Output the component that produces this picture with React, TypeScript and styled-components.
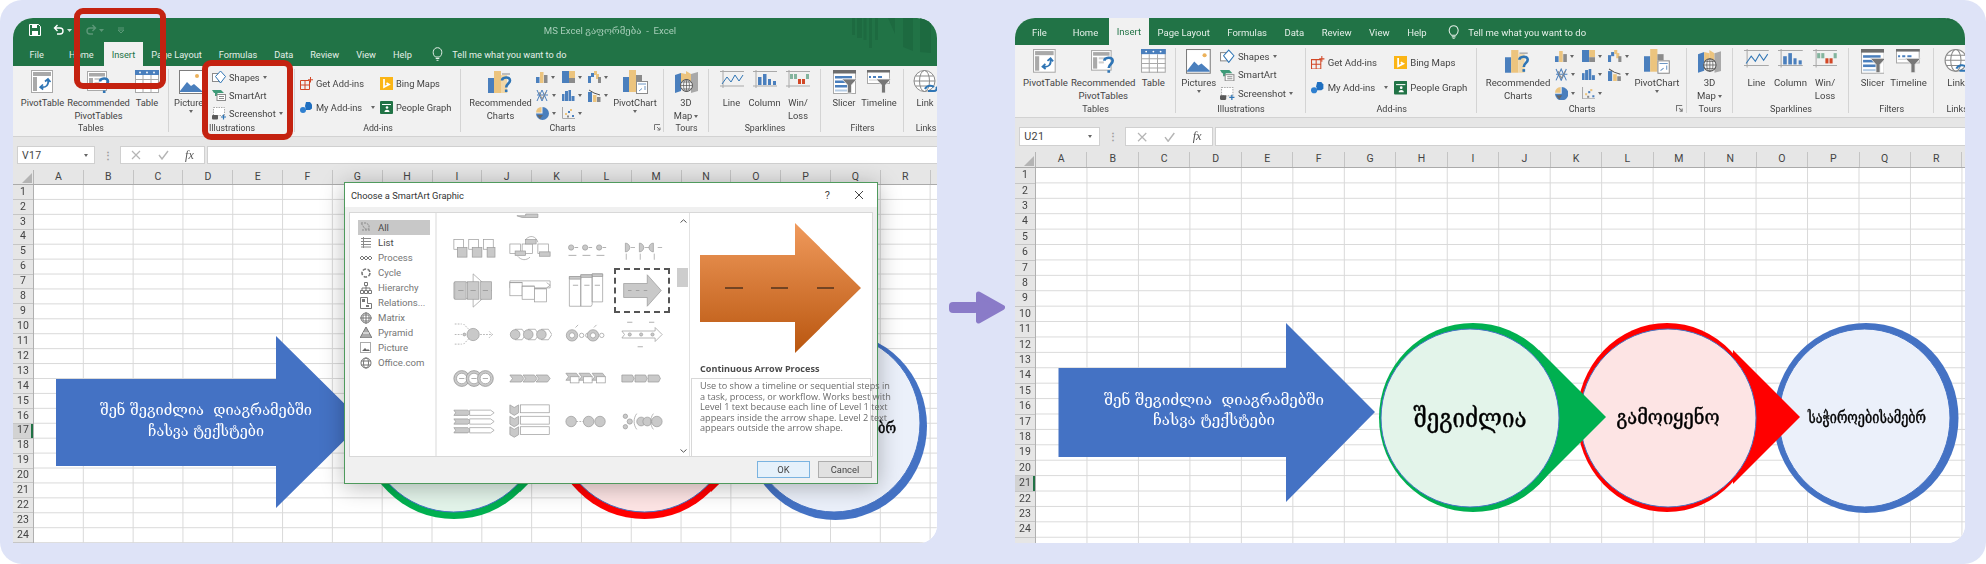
import React from "react";
import styled, { createGlobalStyle } from "styled-components";

const Global = createGlobalStyle`
  html, body { margin: 0; padding: 0; background: #fff; }
  #root { width: 1986px; height: 564px; overflow: hidden; }
  * { box-sizing: border-box; }
`;

const UI = `Roboto, "Open Sans", "Liberation Sans", sans-serif`;
const UI2 = `"Open Sans", "Noto Sans", "Liberation Sans", sans-serif`;
const KA = `"DejaVu Serif", "DejaVu Sans", serif`;

const Page = styled.div`
  width: 1986px; height: 564px; background: #dee3f7; border-radius: 22px;
  display: flex; align-items: flex-start; padding: 18px 21px 21px 13px;
  font-family: ${UI}; color: #444;
`;
const Panel = styled.section<{ $w: number }>`
  position: relative; flex: none; width: ${p => p.$w}px; height: 525px; filter: blur(0.35px);
`;
const Frame = styled.div`
  width: 100%; height: 100%; overflow: hidden; background: #fff; position: relative;
  border-radius: 20px 20px 18px 0; display: flex; flex-direction: column;
`;
const Gutter = styled.div`
  flex: none; width: 78px; padding: 273px 0 0 10px;
`;
const Chrome = styled.div<{ $zoom: number }>`
  zoom: ${p => p.$zoom}; flex: none; position: relative;
`;
const TitleBar = styled.div`
  height: 24px; background: #217346; display: flex; align-items: center; position: relative;
  padding-left: 16px; gap: 5px;
`;
const WindowTitle = styled.div`
  position: absolute; left: 0; right: 0; top: 0; bottom: 0; display: flex; align-items: center; justify-content: center;
  color: #a6cdb8; font-size: 9.6px; white-space: pre; padding-left: 270px;
  font-family: ${UI}, ${KA};
`;
const Streaks = styled.svg<{ $top: number }>`
  position: absolute; right: 0; top: ${p => p.$top}px;
`;
const TabBar = styled.nav<{ $h: number }>`
  height: ${p => p.$h}px; background: #217346; display: flex; align-items: flex-end; padding-left: 8px;
  position: relative; overflow: hidden;
`;
const Tab = styled.div<{ $active?: boolean; $wide?: boolean }>`
  height: ${p => (p.$active ? 100 : 84)}%; display: flex; align-items: center; justify-content: center;
  padding: 0 ${p => (p.$active ? 7.5 : 8.5)}px; font-size: 9.2px; white-space: nowrap;
  margin: 0 ${p => (p.$wide ? 8 : 0)}px 0 ${p => (p.$active ? 2 : 0)}px; align-self: flex-end; flex: none;
  color: ${p => (p.$active ? "#217346" : "#e4efe8")};
  background: ${p => (p.$active ? "#f1f1f1" : "transparent")};
  padding-bottom: ${p => (p.$active ? 0 : 3)}px;
`;
const TellMe = styled.div`
  display: flex; align-items: center; gap: 9px; color: #e4efe8; font-size: 9.2px; margin-left: 12px;
  padding-bottom: 3px; align-self: flex-end; height: 84%;
`;
const Ribbon = styled.div`
  height: 71px; background: #f1f1f1; border-bottom: 1px solid #d2d2d2; display: flex; overflow: hidden;
`;
const Group = styled.div<{ $w: number; $pad?: number; $noline?: boolean }>`
  flex: none; width: ${p => p.$w}px; position: relative; display: flex; flex-direction: column;
  &::after {
    content: ""; position: absolute; right: 0; top: 3px; bottom: 4px; width: 1px;
    background: ${p => (p.$noline ? "transparent" : "#d4d4d4")};
  }
`;
const GroupBody = styled.div<{ $pad: number; $gap?: number }>`
  flex: 1; display: flex; padding-left: ${p => p.$pad}px; gap: ${p => p.$gap ?? 0}px; min-height: 0;
`;
const GroupLabel = styled.div`
  height: 13px; line-height: 12px; text-align: center; font-size: 8.8px; color: #444; position: relative; flex: none; margin-bottom: 1px;
`;
const Launcher = styled.svg`
  position: absolute; right: 3px; top: 2px;
`;
const Large = styled.div<{ $w: number }>`
  flex: none; width: ${p => p.$w}px; display: flex; flex-direction: column; align-items: center;
  padding-top: 4px; font-size: 9.3px; line-height: 12.5px; text-align: center; color: #444; white-space: nowrap;
`;
const IconSlot = styled.div`
  height: 27px; display: flex; align-items: flex-start; justify-content: center;
`;
const Caret = styled.span<{ $ml?: number }>`
  display: inline-block; width: 0; height: 0; border: 2.5px solid transparent; border-top: 3px solid #666; border-bottom: 0;
  vertical-align: middle; margin-left: ${p => p.$ml ?? 0}px;
`;
const SmallColumn = styled.div<{ $step: number; $top: number; $ml?: number; $w?: number }>`
  display: grid; grid-auto-rows: ${p => p.$step}px; padding-top: ${p => p.$top}px; margin-left: ${p => p.$ml ?? 0}px;
  width: ${p => (p.$w ? `${p.$w}px` : "auto")}; flex: none;
`;
const Small = styled.div`
  display: flex; align-items: center; gap: 3px; font-size: 9.3px; white-space: nowrap; color: #444;
`;
const ChartGrid = styled.div`
  display: grid; grid-template-columns: repeat(3, 26px); grid-auto-rows: 18px; padding-top: 2px; flex: none; margin-left: 4px;
`;
const ChartCell = styled.div`
  display: flex; align-items: center; gap: 3px;
`;
const FormulaRow = styled.div`
  height: 33px; background: #e6e6e6; padding: 9px 0 6px 4px; display: flex; gap: 0; align-items: stretch;
`;
const NameBox = styled.div`
  width: 78px; background: #fff; border: 1px solid #d0d0d0; display: flex; align-items: center; justify-content: space-between;
  padding: 0 6px 0 4px; font-size: 10.5px; color: #444; letter-spacing: .3px;
`;
const Dots = styled.div`
  width: 25px; display: flex; align-items: center; justify-content: center; color: #9a9a9a; font-size: 10px; font-weight: 700;
`;
const FxBox = styled.div`
  width: 85px; background: #fff; border: 1px solid #d0d0d0; display: flex; align-items: center; justify-content: space-around;
  margin-right: 2px; padding: 0 2px;
`;
const FxText = styled.span`
  font-family: "Liberation Serif", serif; font-style: italic; font-size: 12px; color: #555;
`;
const FormulaInput = styled.div`
  flex: 1; background: #fff; border: 1px solid #d0d0d0; border-right: 0;
`;
const ColHeader = styled.div<{ $h: number }>`
  height: ${p => p.$h}px; flex: none; display: flex; background: #e6e6e6; border-bottom: 1px solid #ababab;
`;
const Corner = styled.div`
  flex: none; width: 21px; position: relative; border-right: 1px solid #b5b5b5; overflow: hidden;
  &::after { content: ""; position: absolute; right: 1px; bottom: 1px; border: 5px solid transparent; border-right-color: #b4b4b4; border-bottom-color: #b4b4b4; }
`;
const ColCell = styled.div<{ $w: number }>`
  flex: none; width: ${p => p.$w}px; border-right: 1px solid #c4c4c4; display: flex; align-items: center; justify-content: center;
  font-size: 10.5px; color: #444; line-height: 1;
`;
const SheetBody = styled.div`
  flex: 1; display: flex; min-height: 0; overflow: hidden;
`;
const RowHeader = styled.div`
  flex: none; width: 21px; background: #e6e6e6; border-right: 1px solid #b0b0b0; overflow: hidden;
`;
const RowNum = styled.div<{ $h: number; $sel?: boolean }>`
  height: ${p => p.$h}px; border-bottom: 1px solid #c6c6c6; display: flex; align-items: center; justify-content: center;
  font-size: 10.5px; color: #444; line-height: 1; position: relative;
  background: ${p => (p.$sel ? "#d2d2d2" : "transparent")};
  box-shadow: ${p => (p.$sel ? "inset -2px 0 0 #217346" : "none")};
`;
const Cells = styled.div<{ $cw: number; $rh: number }>`
  flex: 1; background-color: #fff;
  background-image: linear-gradient(to right, #d9d9d9 1px, transparent 1px), linear-gradient(to bottom, #d9d9d9 1px, transparent 1px);
  background-size: ${p => p.$cw}px ${p => p.$rh}px;
  background-position: ${p => p.$cw - 1}px ${p => p.$rh - 1}px;
`;
const DiagramLayer = styled.svg`
  position: absolute; left: 0; top: 0; pointer-events: none;
  text { white-space: pre; }
`;
const Annotation = styled.div<{ $x: number; $y: number; $w: number; $h: number }>`
  position: absolute; left: ${p => p.$x}px; top: ${p => p.$y}px; width: ${p => p.$w}px; height: ${p => p.$h}px;
  border: 6px solid #c42210; border-radius: 9px;
`;
const Dialog = styled.div`
  position: absolute; left: 331px; top: 164px; width: 534px; height: 302px; background: #f0f0f0; border: 1px solid #4f9a5d;
  box-shadow: 0 3px 22px rgba(0,0,0,.28); display: flex; flex-direction: column;
`;
const DialogTitle = styled.div`
  height: 24px; background: #fff; display: flex; align-items: center; padding: 0 13px 0 6px; font-size: 9.3px; color: #333; flex: none;
`;
const DialogTitleText = styled.span`
  flex: 1;
`;
const HelpMark = styled.span`
  font-size: 11px; margin-right: 24px; color: #444;
`;
const DialogBody = styled.div`
  margin: 5px 4px 0; height: 245px; background: #fff; border: 1px solid #d8d8d8; display: flex; flex: none;
`;
const CategoryList = styled.ul`
  list-style: none; margin: 0; padding: 7px 0 0 8px; width: 87px; flex: none; border-right: 2px solid #ececec;
`;
const Category = styled.li<{ $on?: boolean; $dim?: boolean }>`
  width: 72px; height: 15px; display: flex; align-items: center; gap: 6px; padding-left: 2px; font-size: 9.6px; white-space: nowrap;
  background: ${p => (p.$on ? "#c8c8c8" : "transparent")};
  color: ${p => (p.$dim ? "#767676" : "#4a4a4a")};
`;
const Gallery = styled.div`
  width: 240px; flex: none; overflow: hidden; display: flex; flex-direction: column; position: relative;
`;
const ThumbGrid = styled.div`
  display: grid; grid-template-columns: repeat(4, 56px); grid-auto-rows: 43.6px; margin: -31px 0 0 9px;
`;
const Thumb = styled.div<{ $sel?: boolean }>`
  display: flex; align-items: center; justify-content: center;
`;
const Selection = styled.div`
  position: absolute; left: 177px; top: 55px; width: 56px; height: 45px; border: 2px dashed #555; pointer-events: none;
`;
const Scrollbar = styled.div`
  width: 13px; flex: none; position: relative; display: flex; flex-direction: column; justify-content: space-between; align-items: center; padding: 6px 0 3px;
  border-right: 1px solid #e2e2e2;
`;
const ScrollThumb = styled.div`
  position: absolute; left: 0; right: 1px; top: 55px; height: 19px; background: #cdcdcd;
`;
const Preview = styled.div`
  flex: 1; min-width: 0; display: flex; flex-direction: column; padding: 0 1px 0 1px;
`;
const PreviewArt = styled.div`
  height: 149px; padding: 10px 0 0 9px; flex: none;
`;
const PreviewName = styled.div`
  height: 16px; padding-left: 9px; font-family: ${UI2}; font-size: 9.1px; font-weight: 700; color: #4a4a4a; white-space: nowrap; flex: none; line-height: 14px;
`;
const PreviewText = styled.div`
  height: 79px; border: 1px solid #d8d8d8; padding: 2px 3px 0 8px; font-family: ${UI2}; font-size: 9.15px; line-height: 10.6px; color: #6a6a6a; white-space: nowrap; flex: none;
`;
const DialogFoot = styled.div`
  flex: 1; display: flex; justify-content: flex-end; align-items: flex-start; padding: 4px 5px 0 0; gap: 8px;
`;
const DialogButton = styled.div<{ $primary?: boolean }>`
  width: ${p => (p.$primary ? 53 : 54)}px; height: 17px; display: flex; align-items: center; justify-content: center; font-size: 9.4px; color: #444;
  background: ${p => (p.$primary ? "#e5f1fb" : "#e1e1e1")};
  border: 1px solid ${p => (p.$primary ? "#7ab3e0" : "#adadad")};
`;

/* ---------- drawings ---------- */
const B = "#4a7fbd", Y = "#ecc47e", G = "#8b8b8b", L = "#a9a9a9";

const Ic = ({ w, h, children }: { w: number; h: number; children?: React.ReactNode }) => (
  <svg width={w} height={h} viewBox={`0 0 ${w} ${h}`} style={{ flex: "none", display: "block" }}>{children}</svg>
);

const IPivot = () => (
  <Ic w={24} h={24}>
    <rect x=".5" y=".5" width="21" height="22" fill="#fff" stroke={L} />
    <rect x="2" y="2" width="18" height="4" fill={L} /><rect x="2" y="7" width="4" height="14" fill={L} />
    <path d="M10 17c5 1 8-2 7-7M14 11.5l3-2.5 2.5 3M12 14.5l-2.8 2.6 3 2.4" fill="none" stroke="#2f75b5" strokeWidth="1.7" />
  </Ic>
);
const IQ = ({ x, y }: { x: number; y: number }) => (
  <g transform={`translate(${x} ${y})`} fill="none" stroke="#2f75b5" strokeWidth="2.6">
    <path d="M0 4.5C0 1 8 0 8 4.5c0 3-3.8 3-3.8 7" /><path d="M4.2 13.5v2.6" />
  </g>
);
const IRecPivot = () => (
  <Ic w={24} h={25}>
    <rect x=".5" y="1.5" width="19" height="19" fill="#fff" stroke={L} />
    <rect x="2" y="3" width="16" height="3.5" fill={L} /><rect x="2" y="8" width="4" height="11" fill={L} />
    <rect x="7.5" y="8" width="6" height="2" fill="#cfcfcf" /><rect x="7.5" y="12" width="5" height="2" fill="#cfcfcf" />
    <IQ x={13} y={7} />
  </Ic>
);
const ITable = () => (
  <Ic w={24} h={24}>
    <rect x=".5" y=".5" width="23" height="22" fill="#fff" stroke={L} />
    <rect x="0" y="0" width="24" height="5" fill="#4a7fbd" />
    <circle cx="5" cy="2.5" r=".9" fill="#fff" /><circle cx="12" cy="2.5" r=".9" fill="#fff" /><circle cx="19" cy="2.5" r=".9" fill="#fff" />
    <path d="M8 5v18M16 5v18M0 9.5h24M0 14h24M0 18.5h24" stroke={L} />
  </Ic>
);
const IPictures = () => (
  <Ic w={24} h={24}>
    <rect x=".5" y=".5" width="23" height="23" fill="#fff" stroke="#7d7d7d" />
    <circle cx="18" cy="6" r="2" fill="#ecb25b" />
    <path d="M1 21l7-9 4 4 3-2 8 7v1H1z" fill="#4a7fbd" />
  </Ic>
);
const IShapes = () => (
  <Ic w={14} h={14}>
    <rect x=".5" y="3.5" width="8" height="8" fill="#fff" stroke={G} />
    <path d="M8.5 1l5 5.5-5 6.5-5-6.5z" fill="#fff" stroke="#2f75b5" />
  </Ic>
);
const ISmartArt = () => (
  <Ic w={14} h={12}>
    <path d="M0 1h9l3 3H5.5v3H3V4H2z" fill="#3e9a78" />
    <rect x="5" y="5.5" width="8.5" height="6" fill="#fff" stroke={G} />
    <path d="M7 7.5h5M7 9.5h5" stroke={G} />
  </Ic>
);
const IScreenshot = () => (
  <Ic w={14} h={13}>
    <rect x="1.5" y=".5" width="11" height="8" fill="#fff" stroke={L} strokeDasharray="1.5 1" />
    <rect x="0" y="8" width="6" height="4.5" rx="1" fill="#5a5a5a" />
    <path d="M11.5 7.5v5M9 10h5" stroke="#2f75b5" strokeWidth="1.2" />
  </Ic>
);
const IGetAddins = () => (
  <Ic w={13} h={13}>
    <path d="M.5 3.5h9v9h-9zM.5 8h9M5 3.5v9" fill="none" stroke="#d24726" />
    <path d="M10.5 0v5.5M8 2.8h5" stroke="#d24726" strokeWidth="1" />
  </Ic>
);
const IMyAddins = () => (
  <Ic w={13} h={12}>
    <path d="M6 0h4l2 2.5v4L10 8H6L5 4z" fill="#1f6fc0" /><circle cx="3" cy="8" r="3" fill="#2f80d0" />
  </Ic>
);
const IBing = () => (
  <Ic w={13} h={13}>
    <rect width="13" height="13" fill="#fbb515" />
    <path d="M4 2v8l5-2.5L6.5 6" fill="none" stroke="#fff" strokeWidth="1.7" />
  </Ic>
);
const IPeople = () => (
  <Ic w={13} h={13}>
    <rect width="13" height="13" rx="1" fill="#217346" />
    <path d="M2 3.5h9" stroke="#fff" /><circle cx="7" cy="6.5" r="1.3" fill="#fff" /><path d="M4.5 11c0-3 5-3 5 0z" fill="#fff" />
  </Ic>
);
const IRecCharts = () => (
  <Ic w={26} h={24}>
    <rect x="0" y="8" width="6" height="15" fill={B} /><rect x="6" y="1" width="7" height="22" fill={Y} />
    <rect x="13" y="5" width="6" height="18" fill="#f0d7a8" />
    <path d="M14 4h8" stroke={G} />
    <IQ x={14} y={6} />
  </Ic>
);
const C1 = () => <Ic w={12} h={11}><rect y="5" width="3.5" height="6" fill={B} /><rect x="4" y="0" width="3.5" height="11" fill={Y} /><rect x="8" y="3" width="3.5" height="8" fill={G} /></Ic>;
const C2 = () => <Ic w={13} h={12}><rect width="7" height="12" fill={B} /><rect x="7" width="6" height="7" fill={Y} /><rect x="7" y="7" width="6" height="5" fill={G} /></Ic>;
const C3 = () => <Ic w={13} h={12}><rect y="5" width="3" height="7" fill={B} /><rect x="3" y="2" width="3" height="4" fill={B} /><rect x="6" y="0" width="3" height="4" fill={Y} /><rect x="8" y="3" width="3" height="5" fill={Y} /><rect x="10" y="6" width="3" height="6" fill={G} /></Ic>;
const C4 = () => <Ic w={13} h={13}><path d="M1 1l5 11 5-11M1 12l5-11 5 11M1 6h11" fill="none" stroke={B} strokeWidth="1" /><path d="M3 3l3 7 4-7" fill="none" stroke={G} /></Ic>;
const C5 = () => <Ic w={13} h={11}><rect y="4" width="2.5" height="7" fill={B} /><rect x="3" y="1" width="3" height="10" fill={B} /><rect x="6.5" y="0" width="2.5" height="11" fill={B} /><rect x="9.5" y="6" width="3" height="5" fill={B} /></Ic>;
const C6 = () => <Ic w={13} h={13}><rect y="3" width="4" height="10" fill={B} /><rect x="5" y="6" width="3.5" height="7" fill={Y} /><rect x="9" y="8" width="3.5" height="5" fill={G} /><path d="M1 1l5 3 6 2" fill="none" stroke="#555" /></Ic>;
const C7 = () => <Ic w={13} h={13}><path d="M6.5 6.5V0a6.5 6.5 0 1 1-6.5 6.5z" fill={B} /><path d="M0 5.5A6 6 0 0 1 5.5 0v5.5z" fill={Y} /><path d="M1 8h6l-3 4z" fill="#666" /></Ic>;
const C8 = () => <Ic w={13} h={12}><path d="M.5 0v11.5H13" stroke={L} fill="none" /><g fill={Y}><rect x="3" y="6" width="2" height="2" /><rect x="8" y="2" width="2" height="2" /></g><g fill={B}><rect x="6" y="4" width="2" height="2" /><rect x="10" y="8" width="2" height="2" /></g><rect x="5" y="8.5" width="2" height="2" fill={G} /></Ic>;

const IPivotChart = () => (
  <Ic w={25} h={24}>
    <rect x="0" y="7" width="6" height="15" fill={B} /><rect x="6" y="0" width="7" height="22" fill={Y} />
    <rect x="13" y="5" width="6" height="6" fill={G} /><rect x="13" y="11" width="6" height="11" fill="#d4d4d4" />
    <rect x="13.5" y="11.5" width="11" height="12" fill="#fff" stroke={G} />
    <path d="M15 14h8M16 21l3-2.5M22 20v-4" stroke="#6c96c4" />
  </Ic>
);
const I3D = () => (
  <Ic w={23} h={24}>
    <path d="M0 5l6-2v18l-6 2z" fill={B} /><path d="M6 3l5 1v15H6z" fill={Y} /><path d="M11 1l5 3v15h-5z" fill={Y} />
    <path d="M16 4l7-2v19l-7 2z" fill={L} />
    <circle cx="11.5" cy="15.5" r="6" fill="#f4f4f4" stroke="#555" />
    <path d="M5.5 15.5h12M11.5 9.5v12M7 12h9M7 19h9" stroke="#555" strokeWidth=".7" />
    <ellipse cx="11.5" cy="15.5" rx="3" ry="6" fill="none" stroke="#555" strokeWidth=".7" />
  </Ic>
);
const SparkFrame = ({ children }: { children?: React.ReactNode }) => (
  <Ic w={24} h={18}>
    <path d="M0 1.5h24M0 16h24M3 0v18" stroke={L} />{children}
  </Ic>
);
const ILine = () => <SparkFrame><path d="M2 14l5-7 4 5 4-7 4 6 4-6" fill="none" stroke="#2f75b5" strokeWidth="1" /></SparkFrame>;
const IColumn = () => <SparkFrame><rect x="5" y="7" width="3.5" height="8" fill={B} /><rect x="10" y="4" width="3.5" height="11" fill={B} /><rect x="15" y="9" width="3" height="6" fill={B} /><rect x="20" y="11" width="3" height="4" fill={B} /></SparkFrame>;
const IWin = () => <SparkFrame><rect x="4" y="4" width="3" height="5" fill="#83b49e" /><rect x="8" y="4" width="3" height="5" fill="#83b49e" /><rect x="12" y="9" width="3" height="5" fill="#d24726" /><rect x="16" y="9" width="3" height="5" fill="#d24726" /><rect x="20" y="4" width="3" height="5" fill="#83b49e" /></SparkFrame>;
const Funnel = ({ x, y }: { x: number; y: number }) => (
  <path transform={`translate(${x} ${y})`} d="M0 0h15l-5.5 6v8h-4V6z" fill="#777" stroke="#f1f1f1" strokeWidth=".8" />
);
const ISlicer = () => (
  <Ic w={23} h={24}>
    <rect x=".5" y=".5" width="22" height="23" fill="#fff" stroke={L} />
    <rect width="23" height="3.5" fill="#6d6d6d" />
    <rect x="2" y="6" width="17" height="2.5" fill={B} /><rect x="2" y="10.5" width="13" height="2.5" fill={B} /><rect x="2" y="15" width="13" height="2.5" fill={B} /><rect x="2" y="19.5" width="13" height="2" fill="#b5cce4" />
    <Funnel x={9} y={9} />
  </Ic>
);
const ITimeline = () => (
  <Ic w={24} h={24}>
    <rect x=".5" y=".5" width="22" height="13" fill="#fff" stroke={L} />
    <rect width="23" height="2.5" fill="#6d6d6d" />
    <path d="M2 7h2M6 7h3M11 7h4" stroke={B} strokeWidth="2" /><path d="M2 10h15" stroke="#ccc" />
    <Funnel x={9} y={9} />
  </Ic>
);
const ILink = () => (
  <Ic w={24} h={24}>
    <circle cx="11.5" cy="11" r="10.5" fill="#fff" stroke="#8a8a8a" />
    <ellipse cx="11.5" cy="11" rx="5" ry="10.5" fill="none" stroke="#8a8a8a" />
    <path d="M1 11h21M2.5 6h18M2.5 16h18" stroke="#8a8a8a" />
    <path d="M12 19c2-4 7-4 9-2M15 21h6c3 0 3-3 2-4" fill="none" stroke="#2f75b5" strokeWidth="2" />
  </Ic>
);

const QuickAccess = () => (
  <>
    <Ic w={12} h={12}><path d="M.5.5h9l2 2v9H.5z" fill="none" stroke="#fff" /><rect x="3" y=".5" width="5" height="3.5" fill="#fff" /><rect x="3" y="7" width="6" height="4.5" fill="#fff" /></Ic>
    <span style={{ width: 1 }} />
    <Ic w={20} h={12}><path d="M3 4h5c4 0 4 6 0 6H5M5.5 1L2.5 4l3 3" fill="none" stroke="#fff" strokeWidth="1.4" /><path d="M15 5h5l-2.5 3z" fill="#d5e5dc" /></Ic>
    <span style={{ width: 2 }} />
    <Ic w={20} h={12}><path d="M11 4H6c-4 0-4 6 0 6h3M8.5 1l3 3-3 3" fill="none" stroke="#5b9777" strokeWidth="1.4" /><path d="M15 5h5l-2.5 3z" fill="#5b9777" /></Ic>
    <span style={{ width: 3 }} />
    <Ic w={8} h={8}><path d="M1 2h6M1 4h6l-3 3z" fill="none" stroke="#5b9777" /></Ic>
  </>
);
const Bulb = () => (
  <Ic w={11} h={14}><path d="M3.5 10C-.5 7 1 .7 5.5.7S11.5 7 7.5 10zM3.7 11.5h3.6M4.5 13.3h2" fill="none" stroke="#e4efe8" strokeWidth="1" /></Ic>
);
const StreakArt = () => (
  <g fill="#1d6a40">
    <rect x="0" y="0" width="3" height="17" /><rect x="5" y="0" width="5" height="20" /><rect x="11.5" y="0" width="3" height="22" />
    <rect x="17" y="0" width="3" height="30" /><rect x="23" y="0" width="3" height="22" />
    <path d="M36 0h7v16z" /><path d="M51 0h10v33l-10-4z" /><path d="M68 0h11v35l-11-1z" />
  </g>
);

const Ribbonbar = () => (
  <Ribbon>
    <Group $w={156}>
      <GroupBody $pad={8} $gap={3}>
        <Large $w={43}><IconSlot><IPivot /></IconSlot>PivotTable</Large>
        <Large $w={63}><IconSlot><IRecPivot /></IconSlot>Recommended<br />PivotTables</Large>
        <Large $w={28}><IconSlot><ITable /></IconSlot>Table</Large>
      </GroupBody>
      <GroupLabel>Tables</GroupLabel>
    </Group>
    <Group $w={126}>
      <GroupBody $pad={4} $gap={3}>
        <Large $w={36}><IconSlot><IPictures /></IconSlot>Pictures<br /><Caret /></Large>
        <SmallColumn $step={18} $top={2}>
          <Small><IShapes />Shapes<Caret /></Small>
          <Small><ISmartArt />SmartArt</Small>
          <Small><IScreenshot />Screenshot<Caret /></Small>
        </SmallColumn>
      </GroupBody>
      <GroupLabel>Illustrations</GroupLabel>
    </Group>
    <Group $w={166}>
      <GroupBody $pad={5}>
        <SmallColumn $step={24.5} $top={5} $w={80}>
          <Small><IGetAddins />Get Add-ins</Small>
          <Small><IMyAddins />My Add-ins<Caret $ml={6} /></Small>
        </SmallColumn>
        <SmallColumn $step={24.5} $top={5}>
          <Small><IBing />Bing Maps</Small>
          <Small><IPeople />People Graph</Small>
        </SmallColumn>
      </GroupBody>
      <GroupLabel>Add-ins</GroupLabel>
    </Group>
    <Group $w={203}>
      <GroupBody $pad={8}>
        <Large $w={63}><IconSlot><IRecCharts /></IconSlot>Recommended<br />Charts</Large>
        <ChartGrid>
          <ChartCell><C1 /><Caret /></ChartCell><ChartCell><C2 /><Caret /></ChartCell><ChartCell><C3 /><Caret /></ChartCell>
          <ChartCell><C4 /><Caret /></ChartCell><ChartCell><C5 /><Caret /></ChartCell><ChartCell><C6 /><Caret /></ChartCell>
          <ChartCell><C7 /><Caret /></ChartCell><ChartCell><C8 /><Caret /></ChartCell>
        </ChartGrid>
        <Large $w={42}><IconSlot><IPivotChart /></IconSlot>PivotChart<br /><Caret /></Large>
      </GroupBody>
      <GroupLabel>Charts
        <Launcher width="7" height="7" viewBox="0 0 7 7"><path d="M.5 6V.5H6M3 3l3 3M6 3.5V6H3.5" fill="none" stroke="#777" /></Launcher>
      </GroupLabel>
    </Group>
    <Group $w={45}>
      <GroupBody $pad={7}>
        <Large $w={30}><IconSlot><I3D /></IconSlot>3D<br /><span>Map<Caret $ml={2} /></span></Large>
      </GroupBody>
      <GroupLabel>Tours</GroupLabel>
    </Group>
    <Group $w={112}>
      <GroupBody $pad={6}>
        <Large $w={33}><IconSlot><ILine /></IconSlot>Line</Large>
        <Large $w={33}><IconSlot><IColumn /></IconSlot>Column</Large>
        <Large $w={34}><IconSlot><IWin /></IconSlot>Win/<br />Loss</Large>
      </GroupBody>
      <GroupLabel>Sparklines</GroupLabel>
    </Group>
    <Group $w={83}>
      <GroupBody $pad={8}>
        <Large $w={30}><IconSlot><ISlicer /></IconSlot>Slicer</Large>
        <Large $w={40}><IconSlot><ITimeline /></IconSlot>Timeline</Large>
      </GroupBody>
      <GroupLabel>Filters</GroupLabel>
    </Group>
    <Group $w={44} $noline>
      <GroupBody $pad={4}>
        <Large $w={34}><IconSlot><ILink /></IconSlot>Link</Large>
      </GroupBody>
      <GroupLabel>Links</GroupLabel>
    </Group>
  </Ribbon>
);

const Formula = ({ name }: { name: string }) => (
  <FormulaRow>
    <NameBox>{name}<Caret /></NameBox>
    <Dots>⋮</Dots>
    <FxBox>
      <Ic w={10} h={10}><path d="M1 1l8 8M9 1L1 9" stroke="#b5b5b5" strokeWidth="1.2" /></Ic>
      <Ic w={11} h={10}><path d="M1 5l3 4 6-8" fill="none" stroke="#b5b5b5" strokeWidth="1.4" /></Ic>
      <FxText>fx</FxText>
    </FxBox>
    <FormulaInput />
  </FormulaRow>
);

const COLS = "ABCDEFGHIJKLMNOPQRS".split("");

const Sheet = ({ cw, rh, hh, sel }: { cw: number; rh: number; hh: number; sel: number }) => (
  <>
    <ColHeader $h={hh}>
      <Corner />
      {COLS.map(c => <ColCell key={c} $w={cw}>{c === "S" ? "" : c}</ColCell>)}
    </ColHeader>
    <SheetBody>
      <RowHeader>
        {Array.from({ length: 25 }, (_, i) => (
          <RowNum key={i} $h={rh} $sel={i + 1 === sel}>{i < 24 ? i + 1 : ""}</RowNum>
        ))}
      </RowHeader>
      <Cells $cw={cw} $rh={rh} />
    </SheetBody>
  </>
);

type NodeSpec = {
  color: string; fill: string; ox: number; oy: number; orx: number; ory: number;
  ix: number; iy: number; irx: number; iry: number; tri?: string; text: string; tx: number; ty: number; tw: number; fs: number; covered?: boolean;
};

const Node = ({ n }: { n: NodeSpec }) => (
  <g>
    <ellipse cx={n.ox} cy={n.oy} rx={n.orx} ry={n.ory} fill={n.color} />
    {n.tri && <polygon points={n.tri} fill={n.color} />}
    <ellipse cx={n.ix} cy={n.iy} rx={n.irx} ry={n.iry} fill={n.fill} stroke="#4472c4" strokeWidth="1" />
  </g>
);
const NodeLabel = ({ n }: { n: NodeSpec }) => (
  <text x={n.tx} y={n.ty} textAnchor="middle" fontFamily={KA} fontSize={n.fs} fill="#000" stroke="#000" strokeWidth=".45"
    textLength={n.tw} lengthAdjust="spacingAndGlyphs">{n.text}</text>
);

const Diagram = ({ vx, arrow, lines, nodes }: {
  vx: number; arrow: string;
  lines: { x: number; y: number; w: number; t: string }[];
  nodes: NodeSpec[];
}) => (
  <DiagramLayer width={vx === 13 ? 924 : 950} height={525} viewBox={`${vx} 18 ${vx === 13 ? 924 : 950} 525`}>
    <polygon points={arrow} fill="#4472c4" />
    {lines.map(l => (
      <text key={l.t} x={l.x} y={l.y} textAnchor="middle" fontFamily={KA} fontSize="14.5" fill="#fff"
        textLength={l.w} lengthAdjust="spacingAndGlyphs">{l.t}</text>
    ))}
    {[...nodes].reverse().map(n => <Node key={n.text} n={n} />)}
    {nodes.filter(n => !n.covered).map(n => <NodeLabel key={n.text} n={n} />)}
  </DiagramLayer>
);

const T1 = "შეგიძლია", T2 = "გამოიყენო", T3 = "საჭიროებისამებრ";
const L1 = "შენ შეგიძლია  დიაგრამებში", L2 = "ჩასვა ტექსტები";
const GREEN = "#00b050", GREENF = "#e3f4ea", RED = "#ff0000", REDF = "#fde4e4", BLUE = "#4472c4", BLUEF = "#ebf0fa";

const leftNodes: NodeSpec[] = [
  { color: GREEN, fill: GREENF, ox: 454, oy: 425.5, orx: 93.5, ory: 93.5, ix: 453.5, iy: 423.5, irx: 88, iry: 88.5, tri: "520,358 588,425 520,492", text: T1, tx: 453, ty: 433, tw: 113, fs: 24, covered: true },
  { color: RED, fill: REDF, ox: 644.5, oy: 425.5, orx: 93.5, ory: 93.5, ix: 644.5, iy: 423.5, irx: 88, iry: 88.5, tri: "711,358 779,425 711,492", text: T2, tx: 644, ty: 432, tw: 103, fs: 19, covered: true },
  { color: BLUE, fill: BLUEF, ox: 835.5, oy: 426, orx: 91.5, ory: 94, ix: 834, iy: 423, irx: 86, iry: 89, text: T3, tx: 836, ty: 433, tw: 120, fs: 15 },
];
const rightNodes: NodeSpec[] = [
  { color: GREEN, fill: GREENF, ox: 1473, oy: 417.5, orx: 94, ory: 94.5, ix: 1470, iy: 418, irx: 89, iry: 89, tri: "1539,350 1606,417 1539,484", text: T1, tx: 1470, ty: 427, tw: 113, fs: 26 },
  { color: RED, fill: REDF, ox: 1667, oy: 417.5, orx: 90, ory: 94.5, ix: 1668, iy: 418, irx: 88, iry: 89, tri: "1733,350 1800,417 1733,484", text: T2, tx: 1668, ty: 424, tw: 103, fs: 20 },
  { color: BLUE, fill: BLUEF, ox: 1866, oy: 418, orx: 92.5, ory: 95, ix: 1864.5, iy: 418, irx: 85.5, iry: 89, text: T3, tx: 1867, ty: 423, tw: 118, fs: 16 },
];

/* gallery thumbs */
const F = "#c9c9c9", S = "#9a9a9a";
const Th = ({ children }: { children?: React.ReactNode }) => (
  <svg width="44" height="35" viewBox="0 0 50 40" fill={F} stroke={S} strokeWidth=".8">{children}</svg>
);
const dash = (x: number, y: number, w = 6) => <path d={`M${x} ${y}h${w}`} key={`${x}-${y}`} stroke="#8e8e8e" fill="none" />;

const thumbs: React.ReactNode[] = [
  <Thumb key="e0" />,
  <Thumb key="e1"><Th><path d="M10 34l6 2h18v-4H20v2H10" /></Th></Thumb>,
  <Thumb key="e2" />,
  <Thumb key="e3" />,

  <Thumb key="a"><Th><g fill="#fff"><rect x="2" y="11" width="11" height="11" /><rect x="19" y="11" width="11" height="11" /><rect x="36" y="11" width="11" height="11" /></g><rect x="6" y="20" width="11" height="11" /><rect x="23" y="20" width="11" height="11" /><rect x="40" y="20" width="9" height="11" /></Th></Thumb>,
  <Thumb key="b"><Th><rect x="2" y="16" width="12" height="11" fill="#fff" /><rect x="16" y="16" width="12" height="11" fill="#fff" /><rect x="34" y="16" width="12" height="11" fill="#fff" /><rect x="20" y="11" width="12" height="5" /><rect x="8" y="24" width="12" height="5" /><rect x="36" y="25" width="12" height="5" /><path d="M20 11c5-6 12-4 14 3M11 30c4 5 10 5 14 1" fill="none" /></Th></Thumb>,
  <Thumb key="c"><Th><circle cx="8" cy="20" r="3" /><circle cx="24" cy="20" r="3" /><circle cx="40" cy="20" r="3" />{dash(12, 20, 4)}{dash(28, 20, 4)}{dash(44, 20, 4)}{dash(5, 29, 9)}{dash(21, 29, 9)}{dash(37, 29, 9)}</Th></Thumb>,
  <Thumb key="d"><Th><path d="M6 15a5 5 0 0 1 0 10zM22 15a5 5 0 0 1 0 10zM38 15a5 5 0 0 0 0 10z" /><path d="M12 20h5M28 20h5M43 20h5M7 27v7M23 27v7M39 27v7" fill="none" /></Th></Thumb>,

  <Thumb key="e"><Th><path d="M2 11h22V1l21 19-21 19V29H2z" fill="#fff" /><rect x="3" y="10" width="13" height="20" /><rect x="17.5" y="10" width="13" height="20" /><rect x="32" y="10" width="13" height="20" />{dash(7, 20)}{dash(21, 20)}{dash(35, 20)}</Th></Thumb>,
  <Thumb key="f"><Th><path d="M2 9h46v8H2z" fill="#fff" /><rect x="2" y="11" width="14" height="15" fill="#fff" /><rect x="16" y="15" width="14" height="15" fill="#fff" /><rect x="30" y="18" width="14" height="15" fill="#fff" /><path d="M2 11h14M16 15h14M30 18h14M44 11l4 3-4 3" fill="none" /></Th></Thumb>,
  <Thumb key="g"><Th><g fill="#fff"><path d="M6 4h13v34H6zM19 2h13v34l-1 2H19zM32 1h12v32H32z" /></g><path d="M6 4h13v3H6zM19 2h13v3H19zM32 1h12v3H32z" />{dash(10, 14)}{dash(23, 14)}{dash(35, 14)}</Th></Thumb>,
  <Thumb key="h"><Th><path d="M4 12h27V2l16 18-16 18V28H4z" />{dash(9, 20, 4)}{dash(18, 20, 4)}{dash(27, 20, 4)}</Th></Thumb>,

  <Thumb key="i"><Th><circle cx="24" cy="20" r="7" /><g fill="none"><path d="M3 8h8M3 20h8M3 31h8M13 8l7 7M13 31l7-7M32 20h14l-4-4M46 20l-4 4" strokeDasharray="2 1.4" /></g><circle cx="14" cy="20" r="1.6" /></Th></Thumb>,
  <Thumb key="j"><Th>{[2, 17, 32].map(x => <g key={x}><path d={`M${x + 6} 14h8l4 6-4 6h-8l4-6z`} fill="#fff" /><circle cx={x + 6} cy="20" r="5.5" /></g>)}</Th></Thumb>,
  <Thumb key="k"><Th><circle cx="9" cy="21" r="6.5" /><circle cx="9" cy="21" r="3" fill="#fff" /><circle cx="20" cy="21" r="2.5" fill="#fff" /><circle cx="27" cy="21" r="2.5" fill="#fff" /><circle cx="33" cy="21" r="6.5" /><circle cx="33" cy="21" r="3" fill="#fff" /><circle cx="43" cy="21" r="2.5" fill="#fff" /><path d="M13 12l3-3M34 12l3-3" fill="none" /></Th></Thumb>,
  <Thumb key="l"><Th><path d="M2 16h38v-4l8 8-8 8v-4H2l3-4z" fill="#fff" /><circle cx="11" cy="20" r="1.8" /><circle cx="24" cy="20" r="1.8" /><circle cx="37" cy="20" r="1.8" />{dash(8, 6)}{dash(33, 6)}{dash(20, 34)}</Th></Thumb>,

  <Thumb key="m"><Th>{[11, 25, 38].map(x => <g key={x}><circle cx={x} cy="20" r="9" strokeWidth="1" /><circle cx={x} cy="20" r="6" fill="#fff" />{dash(x - 3, 20)}</g>)}</Th></Thumb>,
  <Thumb key="n"><Th>{[2, 17, 32].map(x => <path key={x} d={`M${x} 16h13l3 4-3 4H${x}l3-4z`} />)}</Th></Thumb>,
  <Thumb key="o"><Th>{[2, 17, 32].map(x => <g key={x}><path d={`M${x} 14h12l3 4-3 4H${x}l3-4z`} /><rect x={x + 5} y="18" width="10" height="7" fill="#fff" /></g>)}</Th></Thumb>,
  <Thumb key="p"><Th>{[2, 17, 32].map(x => <path key={x} d={`M${x} 16h12l2 4-2 4H${x}z`} />)}</Th></Thumb>,

  <Thumb key="q"><Th>{[7, 17, 27].map(y => <g key={y}><path d={`M2 ${y}h16l3 3-3 3H2l2-3z`} /><path d={`M20 ${y}h24l4 3-4 3H20z`} fill="#fff" /></g>)}</Th></Thumb>,
  <Thumb key="r"><Th>{[1, 14, 26].map(y => <g key={y}><path d={`M2 ${y}l5 3 5-3v9l-5 3-5-3z`} /><rect x="14" y={y} width="33" height="9" fill="#fff" /></g>)}</Th></Thumb>,
  <Thumb key="s"><Th><circle cx="8" cy="20" r="6" /><path d="M14 20h12" fill="none" strokeDasharray="2 1.5" /><circle cx="28" cy="20" r="6" /><circle cx="41" cy="20" r="6" /></Th></Thumb>,
  <Thumb key="t"><Th><circle cx="6" cy="14" r="2.5" /><circle cx="6" cy="26" r="2.5" /><circle cx="11" cy="20" r="3" /><circle cx="24" cy="20" r="5" /><circle cx="31" cy="20" r="5" /><path d="M19 11c-4 5-4 13 0 18M38 11c-4 5-4 13 0 18" fill="none" /><circle cx="42" cy="20" r="6" /></Th></Thumb>,

  <Thumb key="u"><Th><path d="M6 34l2 1M14 34l4 1M28 34l4 1" fill="none" strokeDasharray="2 2" /></Th></Thumb>,
  <Thumb key="v"><Th><rect x="12" y="14" width="14" height="14" /></Th></Thumb>,
  <Thumb key="w"><Th><rect x="4" y="15" width="36" height="16" /></Th></Thumb>,
  <Thumb key="x"><Th><rect x="4" y="22" width="20" height="10" /><rect x="26" y="22" width="20" height="10" /></Th></Thumb>,
];

const categories: [string, React.ReactNode, boolean][] = [
  ["All", <Ic w={12} h={11} key="a"><path d="M1 1h5l3 2v4H5zM2 8h8" fill="none" stroke="#8a8a8a" strokeDasharray="2 1" /></Ic>, false],
  ["List", <Ic w={12} h={11} key="b"><path d="M1 1.5h10M1 4.5h10M1 7.5h10M1 10h10M3.5 0v11" stroke="#8a8a8a" /></Ic>, false],
  ["Process", <Ic w={12} h={11} key="c"><path d="M0 6l2-2 2 2-2 2zM4 6l2-2 2 2-2 2zM8 6l2-2 2 2-2 2z" fill="none" stroke="#777" /></Ic>, true],
  ["Cycle", <Ic w={12} h={12} key="d"><circle cx="6" cy="6" r="4" fill="none" stroke="#777" strokeWidth="1.6" strokeDasharray="3.5 1.5" /></Ic>, true],
  ["Hierarchy", <Ic w={12} h={12} key="e"><path d="M4.5 .5h3v3h-3zM.5 8.5h3v3h-3zM4.5 8.5h3v3h-3zM8.5 8.5h3v3h-3zM6 3.5v5M2 8.5V6h8v2.5" fill="none" stroke="#777" /></Ic>, true],
  ["Relations...", <Ic w={12} h={12} key="f"><path d="M.5.5h7v6h4v5H.5z" fill="#fff" stroke="#777" /><rect x="2" y="2" width="3" height="3" fill="#777" /><rect x="6" y="8" width="3" height="2" fill="#777" /></Ic>, true],
  ["Matrix", <Ic w={12} h={12} key="g"><circle cx="6" cy="6" r="5" fill="none" stroke="#777" /><path d="M6 0v12M0 6h12M3 3h6v6H3z" fill="none" stroke="#777" /></Ic>, true],
  ["Pyramid", <Ic w={12} h={11} key="h"><path d="M6 0l6 11H0z" fill="#aaa" stroke="#777" /><path d="M3 6h6" stroke="#fff" /></Ic>, true],
  ["Picture", <Ic w={12} h={11} key="i"><rect x=".5" y=".5" width="10" height="10" fill="#fff" stroke="#aaa" /><path d="M2 9l3-3 2 2 1-1 2 2z" fill="#666" /></Ic>, true],
  ["Office.com", <Ic w={12} h={12} key="j"><circle cx="6" cy="6" r="5" fill="none" stroke="#777" /><ellipse cx="6" cy="6" rx="2.5" ry="5" fill="none" stroke="#777" /><path d="M1 4h10M1 8h10" stroke="#777" /></Ic>, true],
];

const SmartArtDialog = () => (
  <Dialog>
    <DialogTitle>
      <DialogTitleText>Choose a SmartArt Graphic</DialogTitleText>
      <HelpMark>?</HelpMark>
      <Ic w={10} h={10}><path d="M1 1l8 8M9 1L1 9" stroke="#444" strokeWidth="1" /></Ic>
    </DialogTitle>
    <DialogBody>
      <CategoryList>
        {categories.map(([t, icon, dim], i) => (
          <Category key={t} $on={i === 0} $dim={dim}>{icon}<span>{t}</span></Category>
        ))}
      </CategoryList>
      <Gallery>
        <ThumbGrid>{thumbs}</ThumbGrid>
        <Selection />
      </Gallery>
      <Scrollbar>
        <Ic w={7} h={4}><path d="M.5 3.5L3.5 .8l3 2.7" fill="none" stroke="#555" /></Ic>
        <ScrollThumb />
        <Ic w={7} h={4}><path d="M.5 .5l3 2.7 3-2.7" fill="none" stroke="#555" /></Ic>
      </Scrollbar>
      <Preview>
        <PreviewArt>
          <svg width="162" height="131" viewBox="0 0 162 131">
            <defs>
              <linearGradient id="oa" x1="0" y1="0" x2="0" y2="1">
                <stop offset="0" stopColor="#f09a5c" /><stop offset="1" stopColor="#b9560f" />
              </linearGradient>
            </defs>
            <polygon points="0,32 95,32 95,0 161,65 95,130 95,99 0,99" fill="url(#oa)" />
            <path d="M25 65h18M71 65h17M117 65h17" stroke="#111" strokeWidth="1" />
          </svg>
        </PreviewArt>
        <PreviewName>Continuous Arrow Process</PreviewName>
        <PreviewText>
          Use to show a timeline or sequential steps in<br />
          a task, process, or workflow. Works best with<br />
          Level 1 text because each line of Level 1 text<br />
          appears inside the arrow shape. Level 2 text<br />
          appears outside the arrow shape.
        </PreviewText>
      </Preview>
    </DialogBody>
    <DialogFoot>
      <DialogButton $primary>OK</DialogButton>
      <DialogButton>Cancel</DialogButton>
    </DialogFoot>
  </Dialog>
);

const TABS = ["Home", "Insert", "Page Layout", "Formulas", "Data", "Review", "View", "Help"];

const Tabs = ({ h }: { h: number }) => (
  <TabBar $h={h}>
    <Tab $wide>File</Tab>
    {TABS.map(t => <Tab key={t} $active={t === "Insert"}>{t}</Tab>)}
    <TellMe><Bulb />Tell me what you want to do</TellMe>
    <Streaks $top={h === 24 ? -24 : -32} width="85" height="40" viewBox="0 0 85 40"><StreakArt /></Streaks>
  </TabBar>
);

export default function App() {
  return (
    <Page>
      <Global />
      <Panel $w={924}>
        <Frame>
          <Chrome $zoom={1}>
            <TitleBar>
              <QuickAccess />
              <WindowTitle>MS Excel გაფორმება  -  Excel</WindowTitle>
              <Streaks $top={0} width="85" height="40" viewBox="0 0 85 40"><StreakArt /></Streaks>
            </TitleBar>
            <Tabs h={24} />
            <Ribbonbar />
            <Formula name="V17" />
          </Chrome>
          <Sheet cw={49.82} rh={14.93} hh={15} sel={17} />
          <Diagram vx={13} arrow="56,379 276,379 276,336 363,422 276,508 276,466 56,466"
            lines={[{ x: 206, y: 415, w: 212, t: L1 }, { x: 206, y: 436, w: 116, t: L2 }]} nodes={leftNodes} />
          <SmartArtDialog />
        </Frame>
        <Annotation $x={61} $y={-10} $w={92} $h={81} />
        <Annotation $x={189} $y={42} $w={91} $h={80} />
      </Panel>
      <Gutter>
        <svg width="58" height="33" viewBox="0 0 58 33">
          <path d="M31.5 3l24 13.5-24 13.5z" fill="#8a7bc8" stroke="#8a7bc8" strokeWidth="5" strokeLinejoin="round" />
          <rect x="2" y="11" width="30" height="11" rx="4" fill="#8a7bc8" />
        </svg>
      </Gutter>
      <Panel $w={950}>
        <Frame>
          <Chrome $zoom={1.032}>
            <Tabs h={26} />
            <Ribbonbar />
            <Formula name="U21" />
          </Chrome>
          <Sheet cw={51.47} rh={15.42} hh={16} sel={21} />
          <Diagram vx={1015} arrow="1058.5,368 1286,368 1286,323 1375,412 1286,502 1286,457 1058.5,457"
            lines={[{ x: 1214, y: 405, w: 220, t: L1 }, { x: 1214, y: 425, w: 122, t: L2 }]} nodes={rightNodes} />
        </Frame>
      </Panel>
    </Page>
  );
}
